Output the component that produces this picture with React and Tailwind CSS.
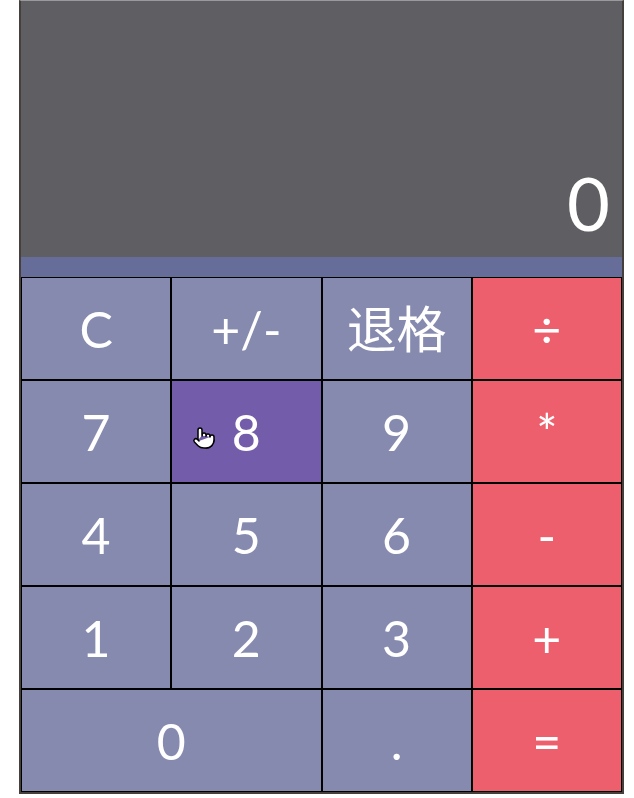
import { Pointer } from "lucide-react";

const keys = [
  { label: "C" },
  { label: "+/-" },
  { label: "退格" },
  { label: "÷", op: true },
  { label: "7" },
  { label: "8", hover: true },
  { label: "9" },
  { label: "*", op: true },
  { label: "4" },
  { label: "5" },
  { label: "6" },
  { label: "-", op: true },
  { label: "1" },
  { label: "2" },
  { label: "3" },
  { label: "+", op: true },
  { label: "0", wide: true },
  { label: "." },
  { label: "=", op: true },
];

const Key = ({ label, op, hover, wide }) => {
  let bg = "bg-[#858aae]";
  if (op) bg = "bg-[#ee5f6d]";
  if (hover) bg = "bg-[#735ca9]";
  return (
    <button
      className={`relative flex h-[103px] items-center justify-center border border-black text-[50px] font-normal leading-none text-white ${bg} ${
        wide ? "col-span-2" : ""
      }`}
    >
      {label}
      {hover && (
        <Pointer
          className="absolute left-[20px] top-[45px] h-[24px] w-[24px]"
          fill="white"
          stroke="black"
          strokeWidth={1.5}
        />
      )}
    </button>
  );
};

export default function App() {
  return (
    <div className="min-h-screen bg-white font-['Lato','Noto_Sans_CJK_SC',sans-serif]">
      <div className="ml-[19px] w-[605px] border-x-2 border-b-2 border-t border-[#45403c] border-t-[#9a9a9a]">
        {/* display */}
        <div className="flex h-[256px] items-end justify-end bg-[#5f5e63] px-[12px] pb-[17px]">
          <span className="text-[74px] font-normal leading-none text-white">0</span>
        </div>
        <div className="h-[20px] bg-[#666d99]" />
        {/* keypad */}
        <div className="grid grid-cols-4">
          {keys.map((k) => (
            <Key key={k.label} {...k} />
          ))}
        </div>
      </div>
    </div>
  );
}
